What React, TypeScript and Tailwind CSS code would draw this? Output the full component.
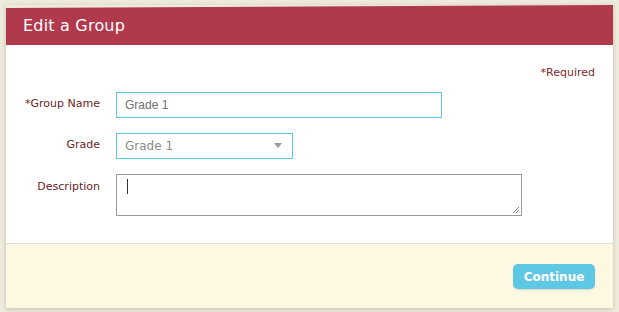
const labelFont = "font-['DejaVu_Sans',sans-serif]";

const FieldLabel = ({ text, className }: { text: string; className?: string }) => (
  <div
    className={`w-[94px] shrink-0 text-right text-[11px] text-[#6b1d1d] ${labelFont} ${className ?? ""}`}
  >
    {text}
  </div>
);

export default function App() {
  return (
    <div className="h-[312px] w-[619px] bg-[#efebdc] px-[6px] pt-[5px] pb-[4px]">
      <div className="flex h-full flex-col shadow-[0_1px_4px_rgba(120,100,60,0.35)]">
        {/* header */}
        <div className="flex h-[40px] items-center bg-[#b0394b] pl-[17px] pt-[2px] [clip-path:polygon(0_3px,100%_0,100%_100%,0_100%)]">
          <h1 className="text-[16px] text-white font-['DejaVu_Sans',sans-serif] tracking-[0.2px]">
            Edit a Group
          </h1>
        </div>

        {/* body */}
        <div className="flex h-[198px] flex-col bg-white">
          <p
            className={`mt-[20px] pr-[18px] text-right text-[11px] text-[#7a2a2a] ${labelFont}`}
          >
            *Required
          </p>

          <div className="mt-[10px] flex items-center gap-[16px]">
            <FieldLabel text="*Group Name" />
            <div className="flex h-[26px] w-[326px] items-center border border-[#5fc8de] pl-[8px] text-[12px] text-[#707070] font-['Liberation_Sans',sans-serif]">
              Grade 1
            </div>
          </div>

          <div className="mt-[15px] flex items-center gap-[16px]">
            <FieldLabel text="Grade" />
            <div
              className={`flex h-[26px] w-[177px] items-center justify-between border border-[#5fc8de] pl-[8px] pr-[10px] text-[12px] text-[#8a8a8a] ${labelFont}`}
            >
              <span>Grade 1</span>
              <svg width="8" height="5" viewBox="0 0 8 5">
                <path d="M0 0h8L4 5z" fill="#9a9a9a" />
              </svg>
            </div>
          </div>

          <div className="mt-[15px] flex items-start gap-[16px]">
            <FieldLabel text="Description" className="pt-[5px]" />
            <div className="relative h-[42px] w-[406px] border border-[#9a9a9a] pl-[10px] pt-[4px]">
              <div className="h-[15px] w-px bg-[#333]" />
              <svg
                className="absolute right-[1px] bottom-[1px]"
                width="8"
                height="8"
                viewBox="0 0 8 8"
              >
                <path d="M7 1L1 7M7 4L4 7M7 6.5L6.5 7" stroke="#777" strokeWidth="0.9" />
              </svg>
            </div>
          </div>
        </div>

        {/* footer */}
        <div className="flex flex-1 items-start justify-end border-t border-[#dcdcd4] bg-[#fdf8e2] pr-[18px] pt-[20px]">
          <button className="h-[25px] w-[82px] rounded-[5px] bg-[#5ec8e4] text-[12px] font-bold text-white font-['DejaVu_Sans',sans-serif] shadow-[0_1px_1px_rgba(0,0,0,0.12)]">
            Continue
          </button>
        </div>
      </div>
    </div>
  );
}
